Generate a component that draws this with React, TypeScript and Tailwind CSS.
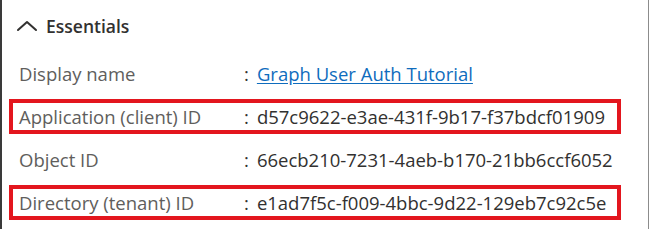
type Row = { label: string; value: string; link?: boolean; boxed?: boolean };

const rows: Row[] = [
  { label: 'Display name', value: 'Graph User Auth Tutorial', link: true },
  { label: 'Application (client) ID', value: 'd57c9622-e3ae-431f-9b17-f37bdcf01909', boxed: true },
  { label: 'Object ID', value: '66ecb210-7231-4aeb-b170-21bb6ccf6052' },
  { label: 'Directory (tenant) ID', value: 'e1ad7f5c-f009-4bbc-9d22-129eb7c92c5e', boxed: true },
];

export default function App() {
  return (
    <div className="h-[229px] w-[651px] bg-white font-['Open_Sans',sans-serif]">
      <div className="h-full w-[649px] border-l-2 border-r border-l-[#3a3a3a] border-r-[#8c8c8c]">
        <div className="box-content flex h-[26px] items-center pl-[14px] pt-[13px]">
          <svg width="22" height="12" viewBox="0 0 22 12" fill="none" className="text-[#323130]">
            <polyline points="2,10 11,2 20,10" stroke="currentColor" strokeWidth="2" strokeLinecap="round" strokeLinejoin="round" />
          </svg>
          <span className="ml-[8px] text-[17.5px] font-semibold text-[#323130]">Essentials</span>
        </div>
        <div className="ml-[7px] mt-[17px] flex w-[612px] flex-col gap-[8px]">
          {rows.map((r) => (
            <div
              key={r.label}
              className={`flex h-[35px] items-center border-4 pl-[6px] text-[18.5px] ${
                r.boxed ? 'border-[#e3161e]' : 'border-transparent'
              }`}
            >
              <span className="w-[225px] shrink-0 text-[#605e5c]">{r.label}</span>
              <span className="text-[#323130]">:</span>
              <span
                className={`ml-[8px] whitespace-nowrap ${
                  r.link ? 'text-[#0f6cbd] underline underline-offset-2' : 'text-[#323130]'
                }`}
              >
                {r.value}
              </span>
            </div>
          ))}
        </div>
      </div>
    </div>
  );
}
